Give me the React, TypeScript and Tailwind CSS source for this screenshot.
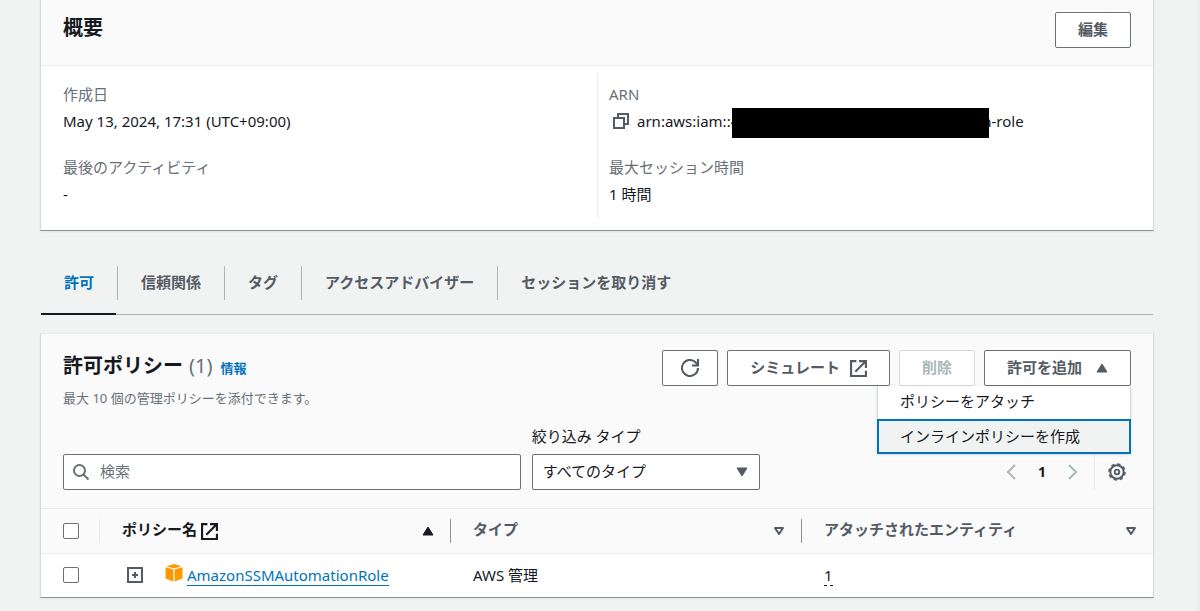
import type { ReactNode } from "react";

const tabs = ["許可", "信頼関係", "タグ", "アクセスアドバイザー", "セッションを取り消す"];

const ExternalIcon = () => (
	<svg viewBox="0 0 16 16" className="size-[17px] shrink-0 fill-none stroke-current stroke-2" aria-hidden="true">
		<path d="M6 1H1v14h14v-5M8.500 1H15v6.500M15 1 5 11" />
	</svg>
);

const CopyIcon = () => (
	<svg viewBox="0 0 16 16" className="size-4 shrink-0 fill-none stroke-current stroke-2" aria-hidden="true">
		<path d="M1 5h10v10H1zM5 5V1h10v10h-4" />
	</svg>
);

const RefreshIcon = () => (
	<svg viewBox="0 0 18 18" className="size-[18px] fill-none stroke-current stroke-2" aria-hidden="true">
		<path d="M17 9a8 8 0 1 1-2.500-5.800L16.500 6M17 0v6.500h-6" />
	</svg>
);

const SearchIcon = () => (
	<svg viewBox="0 0 16 16" className="size-4 fill-none stroke-current stroke-2" aria-hidden="true">
		<circle cx="6.500" cy="6.500" r="5.500" />
		<path d="m10.500 10.500 5 5" />
	</svg>
);

const GearIcon = () => (
	<svg viewBox="0 0 18 18" className="size-[18px] fill-none stroke-current" aria-hidden="true">
		<circle cx="9" cy="9" r="6.700" strokeWidth="2" />
		<circle cx="9" cy="9" r="8" strokeWidth="1.600" strokeDasharray="3.300 2.983" />
		<circle cx="9" cy="9" r="2.300" strokeWidth="1.800" />
	</svg>
);

const BoxIcon = () => (
	<svg viewBox="0 0 18 18" className="-mt-[5px] size-[18px] shrink-0 fill-[#ff9900]" aria-hidden="true">
		<path d="M9 0 16.500 2.200 9 4.400 1.500 2.200zM.5 3.300 8.400 5.600V17.500L.5 14.500zM17.500 3.300 9.600 5.600V17.500l7.900-3z" />
	</svg>
);

const Triangle = ({ up = false, hollow = false }: { up?: boolean; hollow?: boolean }) => (
	<svg
		viewBox="0 0 12 10"
		className={`h-[10px] w-3 shrink-0 stroke-current ${hollow ? "fill-none stroke-2" : "fill-current stroke-1"}`}
		strokeLinejoin="round"
		aria-hidden="true"
	>
		<path d={up ? "M1 9h10L6 1z" : hollow ? "M2 2h8L6 8z" : "M1 1h10L6 9z"} />
	</svg>
);

const Chevron = ({ d }: { d: string }) => (
	<svg viewBox="0 0 10 16" className="h-4 w-[10px] fill-none stroke-current stroke-2" aria-hidden="true">
		<path d={d} />
	</svg>
);

function Button({ children, disabled = false }: { children: ReactNode; disabled?: boolean }) {
	return (
		<button
			disabled={disabled}
			className="flex h-9 items-center gap-[10px] rounded-xs border border-[#687078] bg-white px-[22px] font-bold text-[#545b64] disabled:border-[#d5dbdb] disabled:text-[#aab7b8]"
		>
			{children}
		</button>
	);
}

function Field({ label, children }: { label: string; children: ReactNode }) {
	return (
		<div>
			<dt className="mb-[3px] text-[#687078]">{label}</dt>
			<dd className="flex items-center">{children}</dd>
		</div>
	);
}

function HeaderCell({ children, icon, last = false }: { children: ReactNode; icon: ReactNode; last?: boolean }) {
	return (
		<th scope="col" className={`p-0 text-left ${last ? "text-[#545b64]" : ""}`}>
			<div className={`flex h-6 items-center justify-between pr-4 pl-[22px] ${last ? "" : "border-r border-[#879596]"}`}>
				{children}
				<button aria-label="並べ替え">{icon}</button>
			</div>
		</th>
	);
}

export default function App() {
	return (
		<div className="min-h-screen border-r-[3px] border-[#eceeee] bg-[#f1f3f3] pr-[43px] pb-[13px] pl-10 font-['Noto_Sans','Noto_Sans_CJK_JP',sans-serif] text-[15px] leading-6 text-[#16191f]">
			<section className="border-x border-b border-[#d5dbdb] border-b-[#879596] bg-white shadow-xs">
				<header className="flex items-start justify-between border-b border-[#eaeded] bg-[#fafafa] px-[22px] pt-3 pb-[17px]">
					<h2 className="text-xl leading-8 font-bold">概要</h2>
					<Button>
						<span className="pb-[3px]">編集</span>
					</Button>
				</header>
				<div className="grid grid-cols-2 pt-[7px] pb-3">
					<dl className="space-y-[22px] px-[22px] pt-[9px] pb-3">
						<Field label="作成日">May 13, 2024, 17:31 (UTC+09:00)</Field>
						<Field label="最後のアクティビティ">-</Field>
					</dl>
					<dl className="space-y-[22px] border-l border-[#eaeded] px-[11px] pt-[9px] pb-3">
						<Field label="ARN">
							<button aria-label="ARN をコピー" className="mr-2 ml-1 text-[#545b64]">
								<CopyIcon />
							</button>
							<span>arn:aws:iam::4</span>
							<span className="relative -mx-[7px] -mt-px -mb-[5px] h-[30px] w-[257px] bg-black" />
							<span>n-role</span>
						</Field>
						<Field label="最大セッション時間">1 時間</Field>
					</dl>
				</div>
			</section>

			<nav className="mt-[25px] mr-px ml-px border-b border-[#aab7b8]">
				<ul className="flex">
					{tabs.map((tab, i) => (
						<li key={tab} className="group relative pt-[10px] pb-[14px]">
							<a
								href="#"
								className={`block border-r border-[#aab7b8] px-[23px] pt-1 pb-[6px] font-bold group-last:border-r-0 ${i === 0 ? "text-[#0073bb]" : "text-[#545b64]"}`}
							>
								{tab}
							</a>
							{i === 0 && <span className="absolute right-[2px] -bottom-px left-0 h-[2px] bg-[#16191f]" />}
						</li>
					))}
				</ul>
			</nav>

			<section className="mt-[18px] border border-[#d5dbdb] border-t-[#eaeded] border-b-[#879596] bg-white shadow-xs">
				<header className="bg-[#fafafa] px-[22px] pt-4 pb-[18px]">
					<div className="flex items-start justify-between">
						<div>
							<h2 className="flex items-baseline text-xl leading-8 font-bold">
								許可ポリシー
								<span className="ml-[6px] font-normal text-[#687078]">(1)</span>
								<a href="#" className="ml-2 text-[13px] text-[#0073bb]">
									情報
								</a>
							</h2>
							<p className="mt-[2px] text-[13px] text-[#687078]">最大 10 個の管理ポリシーを添付できます。</p>
						</div>
						<div className="flex gap-[9px]">
							<button
								aria-label="更新"
								className="flex h-9 w-14 items-center justify-center rounded-xs border border-[#687078] bg-white text-[#545b64]"
							>
								<RefreshIcon />
							</button>
							<Button>
								<span className="pb-[2px]">シミュレート</span>
								<ExternalIcon />
							</Button>
							<Button disabled>
								<span className="pb-[2px]">削除</span>
							</Button>
							<div className="relative">
								<Button>
									<span className="mr-1 pb-[2px]">許可を追加</span>
									<Triangle up />
								</Button>
								<ul className="absolute top-full right-0 z-10 w-[254px] bg-white shadow-sm">
									<li>
										<button className="block w-full border-x border-[#d5dbdb] px-[22px] pt-[3px] pb-[6px] text-left">
											ポリシーをアタッチ
										</button>
									</li>
									<li>
										<button className="block h-[35px] w-full border-2 border-[#0073bb] bg-[#f1f3f3] px-[21px] pb-[2px] text-left">
											インラインポリシーを作成
										</button>
									</li>
								</ul>
							</div>
						</div>
					</div>
					<div className="mt-[14px] flex items-end">
						<div className="relative w-3/7">
							<span className="absolute top-[10px] left-[10px] text-[#687078]">
								<SearchIcon />
							</span>
							<input
								type="text"
								aria-label="検索"
								placeholder="検索"
								className="block h-9 w-full rounded-xs border border-[#687078] bg-white pr-3 pb-[2px] pl-9 placeholder:text-[#687078]"
							/>
						</div>
						<div className="ml-[11px] w-[228px]">
							<label htmlFor="type" className="mb-[6px] block">
								絞り込み タイプ
							</label>
							<div className="relative">
								<select
									id="type"
									className="block h-9 w-full appearance-none rounded-xs border border-[#687078] bg-white px-[10px] pb-[2px]"
								>
									<option>すべてのタイプ</option>
								</select>
								<span className="pointer-events-none absolute top-[13px] right-3 text-[#545b64]">
									<Triangle />
								</span>
							</div>
						</div>
						<div className="ml-auto flex h-9 items-center text-[#aab7b8]">
							<button aria-label="前のページ">
								<Chevron d="M9 1 2 8l7 7" />
							</button>
							<button className="px-[22px] text-sm font-bold text-[#16191f]">1</button>
							<button aria-label="次のページ">
								<Chevron d="m1 1 7 7-7 7" />
							</button>
							<div className="ml-4 flex h-full items-center border-l border-[#eaeded] pr-[5px] pl-[13px] text-[#545b64]">
								<button aria-label="設定">
									<GearIcon />
								</button>
							</div>
						</div>
					</div>
				</header>

				<table className="w-full table-fixed">
					<thead>
						<tr className="h-[45px] border-y border-[#eaeded] bg-[#fafafa]">
							<th scope="col" className="w-[59px] p-0">
								<div className="flex h-6 items-center border-r border-[#eaeded] pl-[22px]">
									<input
										type="checkbox"
										aria-label="すべて選択"
										className="size-4 appearance-none rounded-xs border border-[#687078] bg-white"
									/>
								</div>
							</th>
							<HeaderCell icon={<Triangle up />}>
								<span className="flex items-center gap-1">
									<span className="pb-1">ポリシー名</span>
									<ExternalIcon />
								</span>
							</HeaderCell>
							<HeaderCell
								icon={
									<span className="text-[#545b64]">
										<Triangle hollow />
									</span>
								}
							>
								<span className="pb-1 text-[#545b64]">タイプ</span>
							</HeaderCell>
							<HeaderCell icon={<Triangle hollow />} last>
								<span className="pb-1">アタッチされたエンティティ</span>
							</HeaderCell>
						</tr>
					</thead>
					<tbody>
						<tr className="h-[43px]">
							<td className="p-0 pl-[22px]">
								<input
									type="checkbox"
									aria-label="AmazonSSMAutomationRole を選択"
									className="block size-4 appearance-none rounded-xs border border-[#687078] bg-white"
								/>
							</td>
							<td className="p-0 pl-[27px]">
								<div className="flex items-center">
									<button aria-label="展開" className="mr-[22px] text-[#545b64]">
										<svg viewBox="0 0 16 16" className="size-4 fill-none stroke-current stroke-2" aria-hidden="true">
											<path d="M1 1h14v14H1zM8 5v6M5 8h6" />
										</svg>
									</button>
									<BoxIcon />
									<a href="#" className="ml-1 border-b border-[#0073bb] leading-5 text-[#0073bb]">
										AmazonSSMAutomationRole
									</a>
								</div>
							</td>
							<td className="p-0 pl-[22px]">AWS 管理</td>
							<td className="p-0 pl-[22px]">
								<button className="border-b border-dashed border-[#16191f] leading-5">1</button>
							</td>
						</tr>
					</tbody>
				</table>
			</section>
		</div>
	);
}
